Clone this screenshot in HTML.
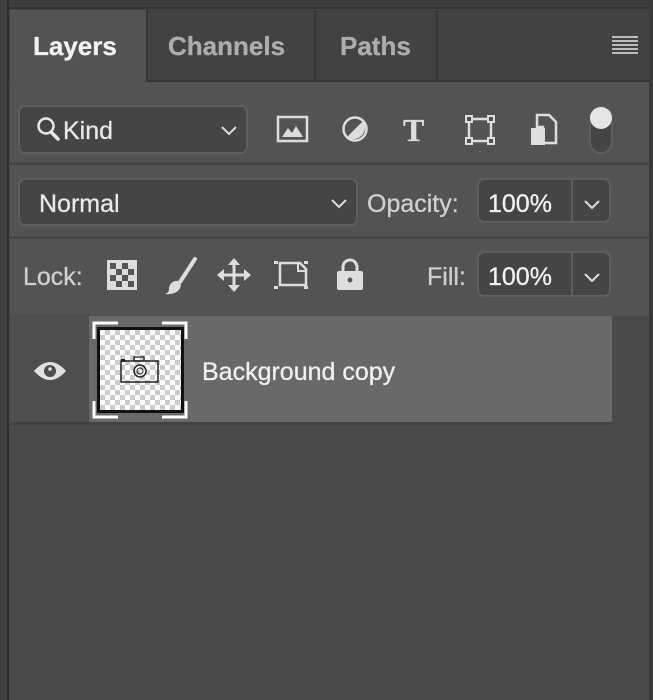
<!DOCTYPE html>
<html><head><style>
*{margin:0;padding:0;box-sizing:border-box}
body{width:653px;height:700px;background:#4a4a4a;position:relative;overflow:hidden;font-family:"Liberation Sans",sans-serif;color:#e8e8e8}
.a{position:absolute}
.box{position:absolute;background:#454545;border:2px solid #5e5e5e;border-radius:7px}
.t{position:absolute;font-size:25px;white-space:nowrap;-webkit-text-stroke:0.3px currentColor}
</style></head><body>
<div class="a" style="left:0;top:0;width:653px;height:10px;background:#3e3e3e"></div>
<div class="a" style="left:0;top:0;width:9px;height:700px;background:#404040"></div>
<div class="a" style="left:7px;top:0;width:2px;height:700px;background:#2e2e2e"></div>
<div class="a" style="left:649px;top:0;width:4px;height:700px;background:#3a3a3a"></div>
<div class="a" style="left:9px;top:7px;width:640px;height:2px;background:#333"></div>
<!-- tab bar -->
<div class="a" style="left:9px;top:9px;width:640px;height:73px;background:#424242"></div>
<div class="a" style="left:10px;top:10px;width:136px;height:73px;background:#535353"></div>
<div class="a" style="left:146px;top:10px;width:2px;height:72px;background:#363636"></div>
<div class="a" style="left:314px;top:10px;width:2px;height:72px;background:#363636"></div>
<div class="a" style="left:436px;top:10px;width:2px;height:72px;background:#363636"></div>
<div class="a" style="left:146px;top:80px;width:503px;height:2px;background:#363636"></div>
<div class="t" style="left:33px;top:31px;font-size:26px;font-weight:bold;color:#f2f2f2">Layers</div>
<div class="t" style="left:168px;top:31px;font-size:26px;font-weight:bold;color:#adadad">Channels</div>
<div class="t" style="left:340px;top:31px;font-size:26px;font-weight:bold;color:#adadad">Paths</div>
<div class="a" style="left:612px;top:36px;width:26px;height:18px;background:repeating-linear-gradient(#bdbdbd 0 2px,transparent 2px 4px)"></div>
<!-- panel -->
<div class="a" style="left:10px;top:82px;width:639px;height:234px;background:#535353"></div>
<div class="a" style="left:10px;top:162px;width:639px;height:3px;background:#464646"></div>
<div class="a" style="left:10px;top:236px;width:639px;height:3px;background:#464646"></div>
<!-- kind -->
<div class="box" style="left:18px;top:105px;width:230px;height:49px"></div>
<svg class="a" style="left:36px;top:116px" width="26" height="28" viewBox="0 0 26 28"><circle cx="10" cy="10" r="7.5" fill="none" stroke="#e8e8e8" stroke-width="2.5"/><path d="M15 16l7 7" stroke="#e8e8e8" stroke-width="3.5" stroke-linecap="round"/></svg>
<div class="t" style="left:63px;top:117px">Kind</div>
<svg class="a" style="left:220px;top:124px" width="18" height="12"><path d="M2 3l7 7 7-7" fill="none" stroke="#ddd" stroke-width="2"/></svg>
<!-- filter icons -->
<svg class="a" style="left:276px;top:114px" width="34" height="30"><rect x="2" y="3" width="29" height="24" fill="none" stroke="#ddd" stroke-width="2.5"/><path d="M6 23l6-9 4 5 4-7 7 11z" fill="#ddd"/></svg>
<svg class="a" style="left:340px;top:114px" width="30" height="30"><circle cx="15" cy="15" r="11.5" fill="none" stroke="#ddd" stroke-width="2.5"/><path d="M23 7A11.5 11.5 0 0 1 7 23z" fill="#ddd"/></svg>
<div class="t" style="left:403px;top:112px;font-family:'Liberation Serif',serif;font-size:32px;color:#ddd;font-weight:bold">T</div>
<svg class="a" style="left:464px;top:114px" width="32" height="32"><rect x="5" y="5" width="22" height="22" fill="none" stroke="#ddd" stroke-width="2.5"/><g fill="#ddd"><rect x="1" y="1" width="8" height="8"/><rect x="23" y="1" width="8" height="8"/><rect x="1" y="23" width="8" height="8"/><rect x="23" y="23" width="8" height="8"/></g><g fill="#535353"><rect x="3" y="3" width="4" height="4"/><rect x="25" y="3" width="4" height="4"/><rect x="3" y="25" width="4" height="4"/><rect x="25" y="25" width="4" height="4"/></g></svg>
<svg class="a" style="left:528px;top:113px" width="30" height="34"><path d="M9 2h12l7 7v21H15V14H9z" fill="none" stroke="#ddd" stroke-width="2.5"/><rect x="3" y="15" width="14" height="17" fill="#ddd"/></svg>
<div class="a" style="left:589px;top:106px;width:24px;height:48px;border:2px solid #5e5e5e;border-radius:12px;background:#454545"></div>
<div class="a" style="left:590px;top:107px;width:22px;height:22px;border-radius:50%;background:#e5e5e5"></div>
<!-- normal -->
<div class="box" style="left:18px;top:178px;width:340px;height:48px"></div>
<div class="t" style="left:39px;top:190px">Normal</div>
<svg class="a" style="left:330px;top:197px" width="18" height="12"><path d="M2 3l7 7 7-7" fill="none" stroke="#ddd" stroke-width="2"/></svg>
<div class="t" style="left:367px;top:190px;color:#d0d0d0">Opacity:</div>
<div class="box" style="left:477px;top:178px;width:134px;height:45px"></div>
<div class="a" style="left:571px;top:180px;width:2px;height:41px;background:#5e5e5e"></div>
<div class="t" style="left:488px;top:190px;color:#f2f2f2">100%</div>
<svg class="a" style="left:583px;top:198px" width="18" height="12"><path d="M2 3l7 7 7-7" fill="none" stroke="#ddd" stroke-width="2"/></svg>
<!-- lock -->
<div class="t" style="left:23px;top:263px;color:#d0d0d0">Lock:</div>
<svg class="a" style="left:106px;top:259px" width="32" height="32"><rect x="1" y="1" width="30" height="30" fill="#ddd"/><g fill="#555"><rect x="4" y="4" width="6" height="6"/><rect x="16" y="4" width="6" height="6"/><rect x="10" y="10" width="6" height="6"/><rect x="22" y="10" width="6" height="6"/><rect x="4" y="16" width="6" height="6"/><rect x="16" y="16" width="6" height="6"/><rect x="10" y="22" width="6" height="6"/><rect x="22" y="22" width="6" height="6"/></g></svg>
<svg class="a" style="left:160px;top:256px" width="40" height="40"><path d="M35 3L20 26" stroke="#ddd" stroke-width="4" stroke-linecap="round"/><path d="M18 25c-6-1-9 4-9 8 0 2-1 4-4 5 8 1 15-2 16-9z" fill="#ddd"/></svg>
<svg class="a" style="left:216px;top:257px" width="36" height="36"><path d="M18 3v30M3 18h30" stroke="#ddd" stroke-width="3"/><path d="M18 1l-6 7h12zM18 35l-6-7h12zM1 18l7-6v12zM35 18l-7-6v12z" fill="#ddd"/></svg>
<svg class="a" style="left:272px;top:257px" width="40" height="36"><path d="M8 6h20l6 6v16H8z" fill="none" stroke="#ddd" stroke-width="2.5"/><path d="M26 6v8h8" fill="none" stroke="#ddd" stroke-width="2"/><g fill="#ddd"><rect x="2" y="4" width="4" height="3"/><rect x="32" y="4" width="4" height="3"/><rect x="2" y="29" width="4" height="3"/><rect x="32" y="29" width="4" height="3"/></g></svg>
<svg class="a" style="left:334px;top:256px" width="32" height="36"><path d="M9 16v-5a7 7 0 0 1 14 0v5" fill="none" stroke="#ddd" stroke-width="3"/><rect x="3" y="15" width="26" height="19" rx="2" fill="#ddd"/><circle cx="16" cy="24" r="2.5" fill="#555"/></svg>
<div class="t" style="left:427px;top:263px;color:#d0d0d0">Fill:</div>
<div class="box" style="left:477px;top:251px;width:134px;height:46px"></div>
<div class="a" style="left:571px;top:253px;width:2px;height:42px;background:#5e5e5e"></div>
<div class="t" style="left:488px;top:263px;color:#f2f2f2">100%</div>
<svg class="a" style="left:583px;top:271px" width="18" height="12"><path d="M2 3l7 7 7-7" fill="none" stroke="#ddd" stroke-width="2"/></svg>
<!-- layer row -->
<div class="a" style="left:10px;top:315px;width:602px;height:108px;background:#4e4e4e"></div>
<div class="a" style="left:89px;top:316px;width:523px;height:106px;background:#696969"></div>
<div class="a" style="left:10px;top:422px;width:602px;height:3px;background:#424242"></div>
<svg class="a" style="left:32px;top:358px" width="36" height="26"><path d="M2 13Q18-5 34 13Q18 31 2 13z" fill="#e0e0e0"/><circle cx="18" cy="13" r="6" fill="#4e4e4e"/><circle cx="18" cy="11" r="1.8" fill="#e0e0e0"/></svg>
<div class="a" style="left:97px;top:327px;width:87px;height:86px;background:#111"></div>
<div class="a" style="left:100px;top:330px;width:81px;height:80px;background-color:#fff;background-image:linear-gradient(45deg,#ccc 25%,transparent 25%,transparent 75%,#ccc 75%),linear-gradient(45deg,#ccc 25%,transparent 25%,transparent 75%,#ccc 75%);background-size:10px 10px;background-position:0 0,5px 5px"></div>
<svg class="a" style="left:92px;top:321px" width="98" height="98"><g fill="none" stroke="#fff" stroke-width="3"><path d="M2 18V2h24M70 2h24v16M2 80v16h24M70 96h24V80"/></g></svg>
<svg class="a" style="left:119px;top:354px" width="42" height="30"><rect x="2" y="7" width="37" height="21" fill="none" stroke="#222" stroke-width="1.5"/><rect x="15" y="3" width="10" height="4" fill="none" stroke="#222" stroke-width="1.3"/><circle cx="21" cy="17" r="6" fill="none" stroke="#222" stroke-width="1.5"/><circle cx="21" cy="17" r="3" fill="none" stroke="#222" stroke-width="1"/><rect x="2" y="5" width="4" height="3" fill="#222"/></svg>
<div class="t" style="left:202px;top:358px;color:#f0f0f0">Background copy</div>
</body></html>
